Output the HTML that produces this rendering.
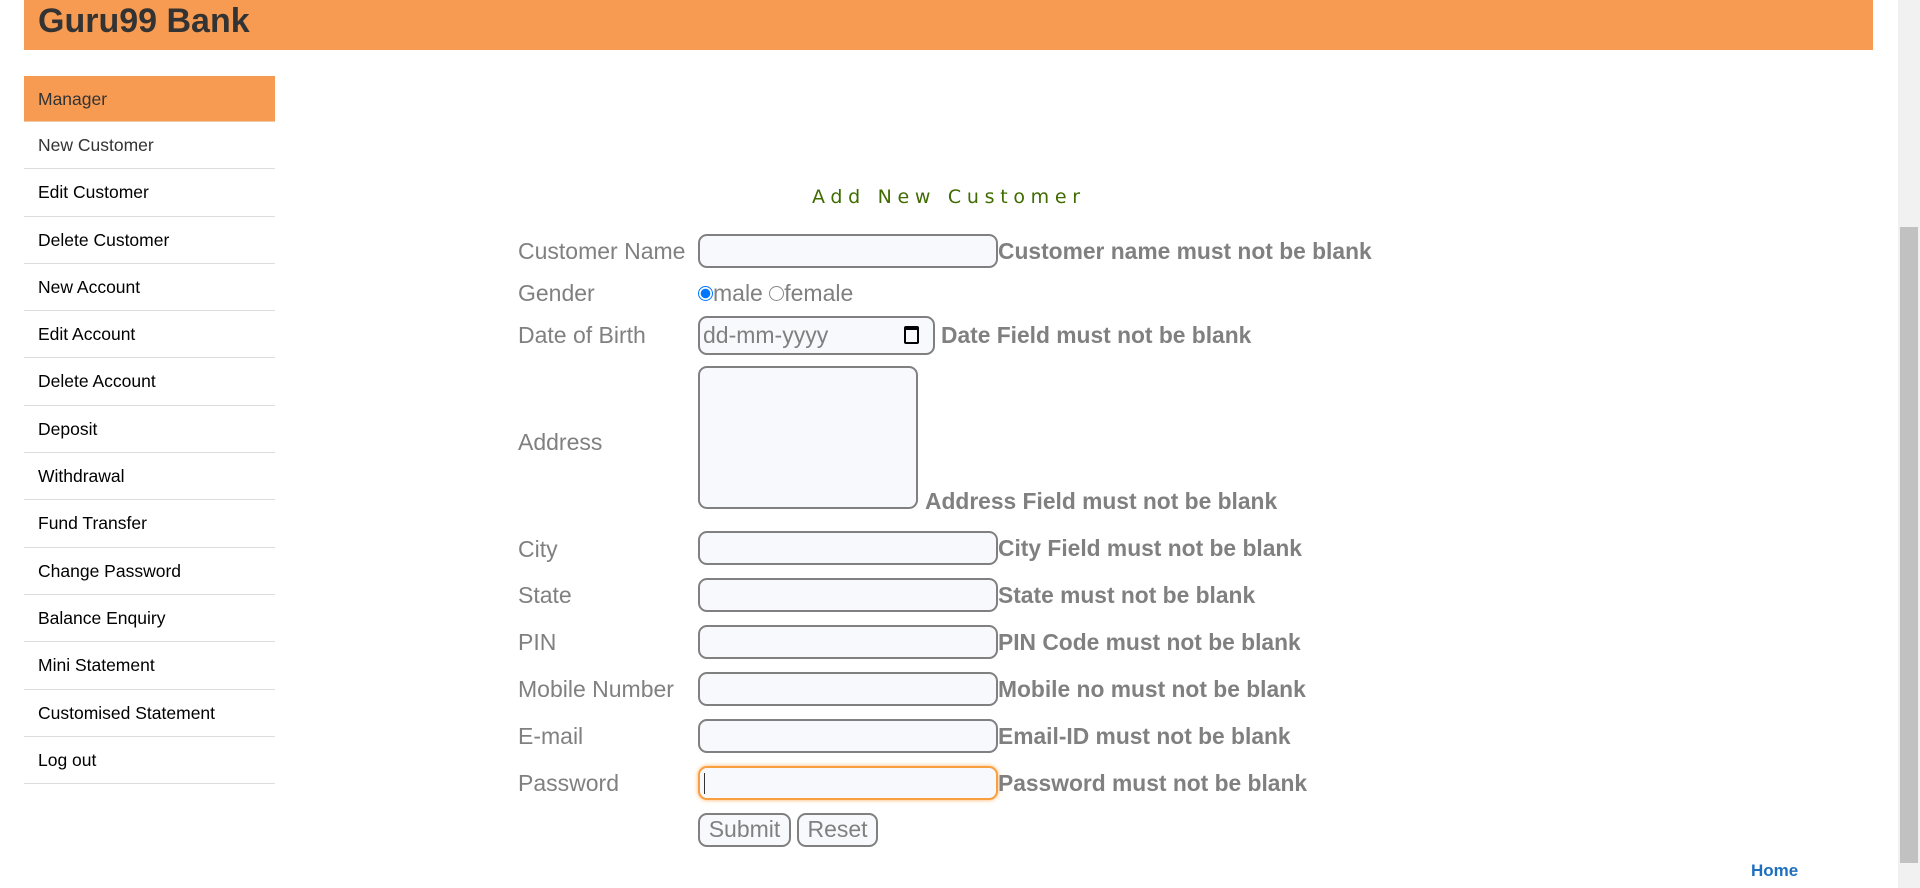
<!DOCTYPE html>
<html><head><meta charset="utf-8"><style>
body{margin:0;width:1920px;height:888px;overflow:hidden;background:#fff;font-family:"Liberation Sans",Arial,sans-serif;position:relative}
.hdr{position:absolute;left:24px;top:0;width:1849px;height:50px;background:#f89b52}
.hdr span{position:absolute;left:14px;top:1px;font-size:34px;font-weight:bold;color:#333;line-height:40px}
.menu{position:absolute;left:24px;top:76px;width:251px}
.menu div{border-bottom:1px solid #ddd;line-height:46px;padding-left:14px;font-size:17.5px;color:#000;box-sizing:border-box;height:47.3px}
.menu div.m{background:#f89b52;color:#333;height:46px;border-bottom:1px solid #f0c9a8}
.menu div.n{color:#333}
.sb{position:absolute;left:1898px;top:0;width:22px;height:888px;background:#f1f1f1}
.sb i{position:absolute;left:2px;top:227px;width:18px;height:636px;background:#c1c1c1}
.t{position:absolute;left:812px;top:186px;font-family:"DejaVu Sans",sans-serif;font-size:19px;letter-spacing:5.7px;color:#3f6b00}
.l{position:absolute;left:518px;font-size:23px;color:#808080;line-height:26px}
.e{position:absolute;font-size:22.8px;font-weight:bold;color:#808080;line-height:26px}
.in{position:absolute;left:698px;width:300px;height:34px;border:2px solid #808080;border-radius:9px;background:#f8f9fd;box-sizing:border-box}
.btn{position:absolute;top:813px;height:34px;border:2px solid #808080;border-radius:9px;background:#f8f9fd;box-sizing:border-box;font-size:23px;color:#808080;text-align:center;line-height:29px}
</style></head><body>
<div class="hdr"><span>Guru99 Bank</span></div>
<div class="menu">
<div class="m">Manager</div>
<div class="n">New Customer</div>
<div>Edit Customer</div>
<div>Delete Customer</div>
<div>New Account</div>
<div>Edit Account</div>
<div>Delete Account</div>
<div>Deposit</div>
<div>Withdrawal</div>
<div>Fund Transfer</div>
<div>Change Password</div>
<div>Balance Enquiry</div>
<div>Mini Statement</div>
<div>Customised Statement</div>
<div>Log out</div>
</div>
<div class="sb"><i></i></div>
<div class="t">Add New Customer</div>

<div class="l" style="top:238px">Customer Name</div>
<div class="in" style="top:234px"></div>
<div class="e" style="left:998px;top:238px">Customer name must not be blank</div>

<div class="l" style="top:280px">Gender</div>
<div style="position:absolute;left:698px;top:280px;font-size:23px;color:#808080;line-height:26px"><span style="display:inline-block;width:15px;height:15px;border-radius:50%;border:1px solid #0075ff;box-sizing:border-box;background:radial-gradient(circle,#0075ff 0 4.5px,#fff 5px);vertical-align:0px"></span>male <span style="display:inline-block;width:15px;height:15px;border-radius:50%;border:1px solid #888;box-sizing:border-box;vertical-align:0px"></span>female</div>

<div class="l" style="top:322px">Date of Birth</div>
<div class="in" style="top:316px;width:237px;height:39px"><span style="position:absolute;left:3px;top:4px;font-size:23px;color:#808080">dd-mm-yyyy</span><span style="position:absolute;left:204px;top:8px;width:15px;height:18px;border:2px solid #000;border-top-width:4px;border-radius:2px;box-sizing:border-box"></span></div>
<div class="e" style="left:941px;top:322px">Date Field must not be blank</div>

<div class="l" style="top:429px">Address</div>
<div class="in" style="top:366px;width:220px;height:143px"></div>
<div class="e" style="left:925px;top:488px">Address Field must not be blank</div>

<div class="l" style="top:536px">City</div>
<div class="in" style="top:531px"></div>
<div class="e" style="left:998px;top:535px">City Field must not be blank</div>

<div class="l" style="top:582px">State</div>
<div class="in" style="top:578px"></div>
<div class="e" style="left:998px;top:582px">State must not be blank</div>

<div class="l" style="top:629px">PIN</div>
<div class="in" style="top:625px"></div>
<div class="e" style="left:998px;top:629px">PIN Code must not be blank</div>

<div class="l" style="top:676px">Mobile Number</div>
<div class="in" style="top:672px"></div>
<div class="e" style="left:998px;top:676px">Mobile no must not be blank</div>

<div class="l" style="top:723px">E-mail</div>
<div class="in" style="top:719px"></div>
<div class="e" style="left:998px;top:723px">Email-ID must not be blank</div>

<div class="l" style="top:770px">Password</div>
<div class="in" style="top:766px;border-color:#f8a040;box-shadow:0 0 4px #ffb060"><span style="position:absolute;left:4px;top:5px;width:1px;height:21px;background:#333"></span></div>
<div class="e" style="left:998px;top:770px">Password must not be blank</div>

<div class="btn" style="left:698px;width:93px">Submit</div>
<div class="btn" style="left:797px;width:81px">Reset</div>

<div style="position:absolute;left:1751px;top:861px;font-size:17px;font-weight:bold;color:#1f6fbf">Home</div>
</body></html>
